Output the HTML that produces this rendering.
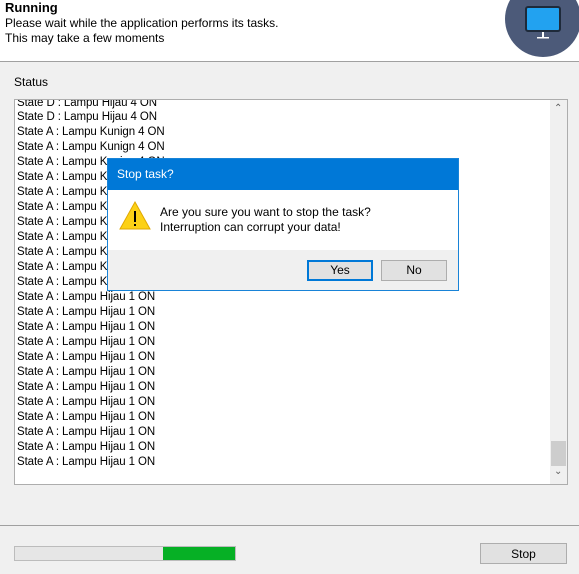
<!DOCTYPE html>
<html><head><style>
*{margin:0;padding:0;box-sizing:border-box}
body{width:579px;height:574px;overflow:hidden;background:#f0f0f0;font-family:"Liberation Sans",sans-serif;font-size:12px;color:#000;position:relative}
.hdr{position:absolute;left:0;top:0;width:579px;height:62px;background:#fff;border-bottom:1px solid #a0a0a0;overflow:hidden}
.abs{position:absolute}
.list{position:absolute;left:14px;top:99px;width:554px;height:386px;background:#fff;border:1px solid #adadad;overflow:hidden}
.list .l{position:absolute;left:2px;white-space:nowrap;line-height:15px;font-size:11.5px;letter-spacing:-0.1px;margin-top:1px}
.list .sb{position:absolute;left:535px;top:0;width:17px;height:384px;background:#f0f0f0}
</style></head><body>
<div class="hdr">
<div class="abs" style="left:5px;top:0px;font-weight:bold;font-size:13px">Running</div>
<div class="abs" style="left:5px;top:16px">Please wait while the application performs its tasks.</div>
<div class="abs" style="left:5px;top:31px">This may take a few moments</div>
<svg class="abs" style="left:500px;top:-20px" width="80" height="80"><circle cx="43" cy="39" r="38" fill="#4c5a79"/><rect x="26" y="27" width="34" height="24" rx="2" fill="#22a2f0" stroke="#1e2a3a" stroke-width="2"/><rect x="42" y="52" width="2" height="5" fill="#fff"/><rect x="37" y="57" width="12" height="1.5" fill="#fff"/></svg>
</div>
<div class="abs" style="left:14px;top:75px">Status</div>
<div class="list">
<div class="l" style="top:-5px">State D : Lampu Hijau 4 ON</div>
<div class="l" style="top:9px">State D : Lampu Hijau 4 ON</div>
<div class="l" style="top:24px">State A : Lampu Kunign 4 ON</div>
<div class="l" style="top:39px">State A : Lampu Kunign 4 ON</div>
<div class="l" style="top:54px">State A : Lampu Kunign 4 ON</div>
<div class="l" style="top:69px">State A : Lampu Kunign 4 ON</div>
<div class="l" style="top:84px">State A : Lampu Kunign 4 ON</div>
<div class="l" style="top:99px">State A : Lampu Kunign 4 ON</div>
<div class="l" style="top:114px">State A : Lampu Kunign 4 ON</div>
<div class="l" style="top:129px">State A : Lampu Kunign 4 ON</div>
<div class="l" style="top:144px">State A : Lampu Kunign 4 ON</div>
<div class="l" style="top:159px">State A : Lampu Kunign 4 ON</div>
<div class="l" style="top:174px">State A : Lampu Kunign 4 ON</div>
<div class="l" style="top:189px">State A : Lampu Hijau 1 ON</div>
<div class="l" style="top:204px">State A : Lampu Hijau 1 ON</div>
<div class="l" style="top:219px">State A : Lampu Hijau 1 ON</div>
<div class="l" style="top:234px">State A : Lampu Hijau 1 ON</div>
<div class="l" style="top:249px">State A : Lampu Hijau 1 ON</div>
<div class="l" style="top:264px">State A : Lampu Hijau 1 ON</div>
<div class="l" style="top:279px">State A : Lampu Hijau 1 ON</div>
<div class="l" style="top:294px">State A : Lampu Hijau 1 ON</div>
<div class="l" style="top:309px">State A : Lampu Hijau 1 ON</div>
<div class="l" style="top:324px">State A : Lampu Hijau 1 ON</div>
<div class="l" style="top:339px">State A : Lampu Hijau 1 ON</div>
<div class="l" style="top:354px">State A : Lampu Hijau 1 ON</div>
<div class="sb"><span style="position:absolute;left:4px;top:3px;font-size:10px;color:#606060">&#8963;</span><div style="position:absolute;left:1px;top:341px;width:15px;height:25px;background:#cdcdcd"></div><span style="position:absolute;left:4px;top:366px;font-size:10px;color:#606060">&#8964;</span></div>
</div>
<div class="abs" style="left:0;top:525px;width:579px;height:1px;background:#a0a0a0"></div>
<div class="abs" style="left:14px;top:546px;width:222px;height:15px;background:#e6e6e6;border:1px solid #bcbcbc"></div>
<div class="abs" style="left:163px;top:547px;width:72px;height:13px;background:#06b025"></div>
<div class="abs" style="left:480px;top:543px;width:87px;height:21px;background:#e1e1e1;border:1px solid #adadad;text-align:center;line-height:20px">Stop</div>
<div class="abs" style="left:107px;top:158px;width:352px;height:133px;background:#f0f0f0;border:1px solid #1883d7">
<div style="height:31px;background:#0078d7;color:#fff;padding-left:9px;line-height:31px;font-size:12px">Stop task?</div>
<div style="height:60px;background:#fff;position:relative">
<svg style="position:absolute;left:10px;top:10px" width="34" height="32"><path d="M17 2 L32 29 L2 29 Z" fill="#fcd116" stroke="#e0a800" stroke-width="1"/><rect x="16" y="11" width="2" height="11" fill="#000"/><rect x="16" y="24" width="2" height="2" fill="#000"/></svg>
<div style="position:absolute;left:52px;top:15px;line-height:15px">Are you sure you want to stop the task?<br>Interruption can corrupt your data!</div>
</div>
<div style="position:absolute;left:199px;top:101px;width:66px;height:21px;background:#e1e1e1;border:2px solid #0078d7;text-align:center;line-height:17px">Yes</div>
<div style="position:absolute;left:273px;top:101px;width:66px;height:21px;background:#e1e1e1;border:1px solid #adadad;text-align:center;line-height:19px">No</div>
</div>
</body></html>
